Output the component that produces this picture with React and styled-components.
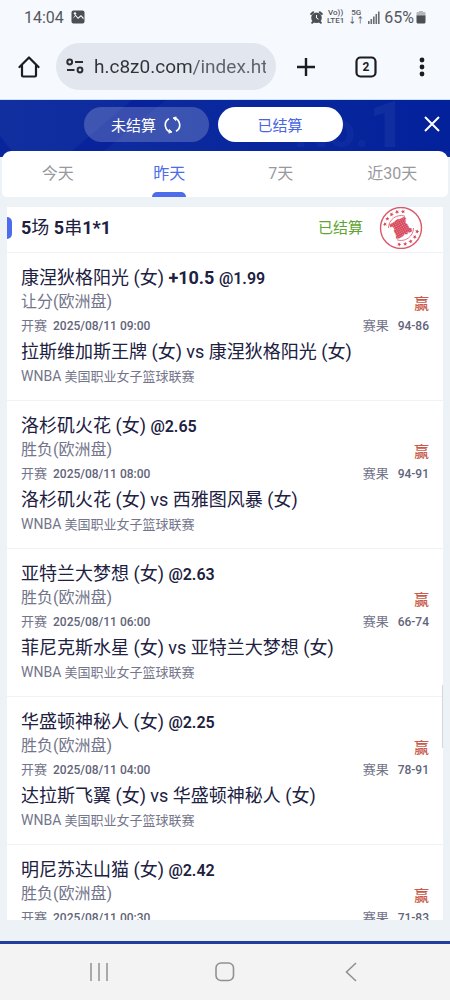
import React, { useState } from "react";
import styled, { createGlobalStyle, css } from "styled-components";

const GlobalStyle = createGlobalStyle`
  * {
    box-sizing: border-box;
  }
  body {
    margin: 0;
    background: #edf2f6;
    font-family: Roboto, "Noto Sans CJK SC", sans-serif;
    color: #20203f;
  }
  button, input {
    font-family: inherit;
    border: 0;
    padding: 0;
    background: none;
  }
  button {
    cursor: pointer;
  }
`;

const Screen = styled.div`
  display: flex;
  flex-direction: column;
  height: 100vh;
  overflow: hidden;
`;

const StatusBar = styled.div`
  display: flex;
  align-items: center;
  justify-content: space-between;
  flex: none;
  height: 34px;
  padding: 0 24px;
  background: #f6f9fe;
  color: #55585c;
  font-size: 16px;
`;

const StatusGroup = styled.div`
  display: flex;
  align-items: center;
  gap: ${({ $gap }) => $gap}px;
`;

const NetworkLabel = styled.span`
  display: flex;
  flex-direction: column;
  align-items: center;
  font-size: 8px;
  line-height: 8px;
  font-weight: 500;
`;

const BrowserBar = styled.div`
  display: flex;
  align-items: center;
  flex: none;
  height: 66px;
  padding: 0 11px 0 12px;
  background: #f6f9fe;
  border-bottom: 1px solid #c9e2f6;
`;

const BarButton = styled.button`
  display: grid;
  place-items: center;
  width: ${({ $width }) => $width}px;
  height: 44px;
  color: #1b1d21;
`;

const AddressBar = styled.div`
  display: flex;
  align-items: center;
  flex: 1;
  min-width: 0;
  gap: 10px;
  height: 47px;
  margin: 0 9px 1px 11px;
  padding: 0 10px;
  border-radius: 24px;
  background: #e2e7ef;
  color: #2b2d31;
`;

const AddressInput = styled.input`
  flex: 1;
  min-width: 0;
  font-size: 19px;
  outline: none;
  color: transparent;
  background: linear-gradient(90deg, #303338 100px, #5d6168 100px);
  background-clip: text;
`;

const Hero = styled.header`
  position: relative;
  display: flex;
  justify-content: center;
  align-items: flex-start;
  gap: 9px;
  flex: none;
  height: 51px;
  padding: 7px 24px 0 0;
  background: linear-gradient(90deg, #112f9f, #0a289d 50%, #03219b);
`;

const HeroArt = styled.svg`
  position: absolute;
  left: 0;
  top: 0;
  width: 100%;
  height: 100%;
`;

const Watermark = styled.span`
  position: absolute;
  right: 44px;
  bottom: 0;
  display: flex;
  align-items: flex-end;
  color: rgba(255, 255, 255, 0.05);
  font-size: 48px;
  font-weight: 700;
  line-height: 40px;

  b {
    font-size: 64px;
    line-height: 51px;
  }
`;

const Pill = styled.button`
  position: relative;
  display: flex;
  align-items: center;
  justify-content: center;
  gap: 8px;
  flex: 0 1 125px;
  height: 35px;
  border-radius: 18px;
  font-size: 15px;
  color: #fff;
  background: rgba(255, 255, 255, 0.2);

  ${({ $active }) =>
    $active &&
    css`
      color: #4865e5;
      background: #fff;
    `}
`;

const CloseButton = styled.button`
  position: absolute;
  top: 8px;
  right: 2px;
  display: grid;
  place-items: center;
  width: 32px;
  height: 32px;
  color: #fff;
`;

const TabsWrap = styled.div`
  flex: none;
  padding: 0 2px;
  background: linear-gradient(#0a289d 6px, transparent 6px);
`;

const Tabs = styled.nav`
  display: grid;
  grid-template-columns: repeat(4, 1fr);
  height: 46px;
  background: #fff;
  border-radius: 9px 9px 5px 5px;
`;

const Tab = styled.button`
  position: relative;
  padding-bottom: 4px;
  font-size: 16px;
  color: ${({ $active }) => ($active ? "#4d6cec" : "#98999d")};

  &::after {
    content: "";
    position: absolute;
    left: 50%;
    bottom: 0;
    width: 34px;
    height: 5px;
    margin-left: -17px;
    border-radius: 5px 5px 0 0;
    background: ${({ $active }) => ($active ? "#4d6cec" : "transparent")};
  }
`;

const BetList = styled.main`
  flex: 1;
  min-height: 0;
  margin: 10px 7px 21px;
  overflow-y: auto;
  scrollbar-width: none;
  background: #fff;
`;

const Summary = styled.div`
  display: flex;
  align-items: center;
  height: 46px;
  padding: 0 20px 4px 0;
  border-bottom: 1px solid #f0f2f5;

  &::before {
    content: "";
    width: 5px;
    height: 22px;
    margin-right: 9px;
    border-radius: 0 5px 5px 0;
    background: #4d6cec;
  }
`;

const SummaryTitle = styled.h1`
  flex: 1;
  margin: 0;
  font-size: 18px;
  line-height: 26px;
  font-weight: 400;

  b {
    font-weight: 700;
  }
`;

const Settled = styled.span`
  margin-right: 16px;
  font-size: 15px;
  line-height: 26px;
  color: #5ea532;
`;

const Bet = styled.article`
  padding: 12px 14px 11px;
  border-bottom: 1px solid #f0f2f5;
`;

const BetTitle = styled.h2`
  margin: 0;
  font-size: 18px;
  line-height: 26px;
  font-weight: 400;

  b {
    font-weight: 700;
  }
`;

const Odds = styled.span`
  font-size: 16px;
  line-height: 1;
  font-weight: 600;
`;

const Line = styled.div`
  display: flex;
  justify-content: space-between;
  align-items: center;
  color: #73758a;
`;

const Market = styled.span`
  font-size: 16px;
  line-height: 22px;
`;

const Outcome = styled.span`
  padding-top: 4px;
  font-size: 15px;
  line-height: 18px;
  font-weight: 500;
  color: #c9594c;
`;

const Meta = styled.span`
  display: flex;
  gap: ${({ $gap }) => $gap}px;
  font-size: 13px;
  line-height: 26px;

  b {
    font-size: 12px;
    font-weight: 500;
    color: #62647a;
  }
`;

const Match = styled.p`
  margin: 0;
  font-size: 18px;
  line-height: 26px;
`;

const League = styled.p`
  margin: 0;
  font-size: 13px;
  line-height: 24px;
  color: #73758a;

  span {
    font-size: 14px;
    line-height: 1;
  }
`;

const ScrollThumb = styled.span`
  position: absolute;
  top: 685px;
  right: 7px;
  width: 1px;
  height: 63px;
  background: #d3d7dd;
`;

const SystemNav = styled.footer`
  display: grid;
  grid-template-columns: repeat(3, 126px);
  justify-content: center;
  flex: none;
  height: 59px;
  border-top: 3px solid #213e9f;
  background: #f3f3f3;
`;

const NavButton = styled.button`
  display: grid;
  place-items: center;
  color: #919191;
`;

const bets = [
  {
    team: "康涅狄格阳光 (女)",
    handicap: "+10.5",
    odds: "@1.99",
    market: "让分(欧洲盘)",
    start: "2025/08/11 09:00",
    score: "94-86",
    match: "拉斯维加斯王牌 (女) vs 康涅狄格阳光 (女)",
  },
  {
    team: "洛杉矶火花 (女)",
    odds: "@2.65",
    market: "胜负(欧洲盘)",
    start: "2025/08/11 08:00",
    score: "94-91",
    match: "洛杉矶火花 (女) vs 西雅图风暴 (女)",
  },
  {
    team: "亚特兰大梦想 (女)",
    odds: "@2.63",
    market: "胜负(欧洲盘)",
    start: "2025/08/11 06:00",
    score: "66-74",
    match: "菲尼克斯水星 (女) vs 亚特兰大梦想 (女)",
  },
  {
    team: "华盛顿神秘人 (女)",
    odds: "@2.25",
    market: "胜负(欧洲盘)",
    start: "2025/08/11 04:00",
    score: "78-91",
    match: "达拉斯飞翼 (女) vs 华盛顿神秘人 (女)",
  },
  {
    team: "明尼苏达山猫 (女)",
    odds: "@2.42",
    market: "胜负(欧洲盘)",
    start: "2025/08/11 00:30",
    score: "71-83",
  },
];

const ranges = ["今天", "昨天", "7天", "近30天"];

const PictureIcon = () => (
  <svg width="14" height="14" viewBox="0 0 14 14">
    <rect x="0.5" y="0.5" width="13" height="13" rx="2" fill="#4c4f53" />
    <path d="M1.500 9l3-3 2.500 3 3-2.500 2.500 3V7.500L10 5 7 7.500 4.500 4.500z" fill="#f6f9fe" />
    <circle cx="4" cy="3.500" r="1.200" fill="#f6f9fe" />
  </svg>
);

const AlarmIcon = () => (
  <svg width="13" height="13" viewBox="0 0 13 13">
    <g stroke="#4c4f53" strokeWidth="2" strokeLinecap="round">
      <path d="M1.200 3l2-1.800M11.800 3l-2-1.800M2.200 11.800l1.300-1.300M10.800 11.800l-1.300-1.300" />
    </g>
    <circle cx="6.500" cy="6.700" r="5.300" fill="#4c4f53" />
    <path d="M6.500 4v3l2 1.200" fill="none" stroke="#f6f9fe" />
  </svg>
);

const SignalIcon = () => (
  <svg width="12" height="13" viewBox="0 0 12 13" fill="#6a6d71">
    <rect x="0" y="10" width="1.600" height="3" />
    <rect x="2.500" y="8" width="1.600" height="5" />
    <rect x="5" y="5.500" width="1.600" height="7.500" />
    <rect x="7.500" y="3" width="1.600" height="10" />
    <rect x="10" y="0.500" width="1.600" height="12.500" />
  </svg>
);

const BatteryIcon = () => (
  <svg width="10" height="14" viewBox="0 0 10 14">
    <path d="M3 1h4v1h1.500a1 1 0 011 1v3h-9V3a1 1 0 011-1H3z" fill="#b4b7bb" />
    <path d="M0.500 5.500h9V12a1.500 1.500 0 01-1.500 1.500H2A1.500 1.500 0 01.5 12z" fill="#4c4f53" />
  </svg>
);

const HomeIcon = () => (
  <svg width="22" height="22" viewBox="0 0 22 22" fill="none" stroke="currentColor" strokeWidth="2.200" strokeLinejoin="round" strokeLinecap="round">
    <path d="M1.500 11L11 1.500 20.500 11M4 9.500V19.500a1 1 0 001 1h12a1 1 0 001-1V9.500" />
  </svg>
);

const TuneIcon = () => (
  <svg width="18" height="16" viewBox="0 0 18 16" fill="none" stroke="currentColor" strokeWidth="2">
    <circle cx="3.700" cy="4" r="2.400" />
    <path d="M9 4h8M1 12h7.500" />
    <circle cx="14" cy="12" r="2.400" />
  </svg>
);

const RefreshIcon = () => (
  <svg width="17" height="18" viewBox="0 0 17 18" fill="none" stroke="currentColor" strokeWidth="1.600">
    <path d="M7.500 16.100A7.200 7.200 0 015 2.700M9.500 1.900a7.200 7.200 0 012.500 13.400" />
    <path d="M5.200 13.200l2.800 2.800-3.200 1.200zM11.800 4.800L9 2l3.200-1.200z" fill="currentColor" strokeWidth="0.600" />
  </svg>
);

const star = "M0-2.100L.6-.7 2.100-.7.9.4 1.300 1.900 0 1-1.300 1.900-.9.4-2.100-.7-.6-.7z";

const Stamp = () => (
  <svg width="44" height="42" viewBox="0 1 44 42" role="img" aria-label="赢">
    <defs>
      <pattern id="grain" width="2" height="2" patternUnits="userSpaceOnUse">
        <rect width="2" height="2" fill="#d6475a" />
        <rect width="1" height="1" fill="#eb909d" />
      </pattern>
    </defs>
    <g fill="none" stroke="#d9586a">
      <circle cx="22" cy="22" r="20.500" strokeWidth="1.400" />
      <path d="M9.500 22A12.500 12.500 0 0126 10.200" strokeWidth="0.800" />
      <path d="M34.500 22A12.500 12.500 0 0118 33.800" strokeWidth="0.800" />
    </g>
    <g fill="#d6475a">
      {[193, 214, 235, 256, 277, 12, 33, 54, 75, 96].map((deg) => (
        <path key={deg} d={star} transform={`rotate(${deg} 22 22) translate(38.500 22)`} />
      ))}
    </g>
    <text
      x="22"
      y="28"
      textAnchor="middle"
      fontSize="17"
      fontWeight="900"
      fill="url(#grain)"
      stroke="url(#grain)"
      strokeWidth="1.500"
      transform="rotate(-28 22 22)"
    >
      赢
    </text>
  </svg>
);

const BetItem = ({ bet }) => (
  <Bet>
    <BetTitle>
      {bet.team} {bet.handicap && <b>{bet.handicap} </b>}
      <Odds>{bet.odds}</Odds>
    </BetTitle>
    <Line>
      <Market>{bet.market}</Market>
      <Outcome>赢</Outcome>
    </Line>
    <Line>
      <Meta $gap={6}>
        开赛 <b>{bet.start}</b>
      </Meta>
      <Meta $gap={9}>
        赛果 <b>{bet.score}</b>
      </Meta>
    </Line>
    {bet.match && (
      <>
        <Match>{bet.match}</Match>
        <League>
          <span>WNBA</span> 美国职业女子篮球联赛
        </League>
      </>
    )}
  </Bet>
);

const App = () => {
  const [range, setRange] = useState("昨天");
  const [settled, setSettled] = useState(true);

  return (
    <Screen>
      <GlobalStyle />
      <StatusBar>
        <StatusGroup $gap={7}>
          <span>14:04</span>
          <PictureIcon />
        </StatusGroup>
        <StatusGroup $gap={4}>
          <AlarmIcon />
          <NetworkLabel>
            <span>Vo))</span>
            <span>LTE1</span>
          </NetworkLabel>
          <NetworkLabel>
            <span>5G</span>
            <span>↓↑</span>
          </NetworkLabel>
          <SignalIcon />
          <StatusGroup $gap={2}>
            <span>65%</span>
            <BatteryIcon />
          </StatusGroup>
        </StatusGroup>
      </StatusBar>

      <BrowserBar>
        <BarButton $width={33} aria-label="Home">
          <HomeIcon />
        </BarButton>
        <AddressBar>
          <TuneIcon />
          <AddressInput aria-label="Address" defaultValue="h.c8z0.com/index.ht" />
        </AddressBar>
        <BarButton $width={42} aria-label="New tab">
          <svg width="20" height="20" viewBox="0 0 20 20" stroke="currentColor" strokeWidth="2.400">
            <path d="M10 1v18M1 10h18" />
          </svg>
        </BarButton>
        <BarButton $width={78} aria-label="Tabs">
          <svg width="22" height="22" viewBox="0 0 22 22">
            <rect x="1.500" y="1.500" width="19" height="19" rx="4" fill="none" stroke="currentColor" strokeWidth="2.200" />
            <text x="11" y="15" textAnchor="middle" fontSize="12" fontWeight="700" fill="currentColor">
              2
            </text>
          </svg>
        </BarButton>
        <BarButton $width={34} aria-label="Menu">
          <svg width="6" height="20" viewBox="0 0 6 20" fill="currentColor">
            <circle cx="3" cy="3" r="2.400" />
            <circle cx="3" cy="10" r="2.400" />
            <circle cx="3" cy="17" r="2.400" />
          </svg>
        </BarButton>
      </BrowserBar>

      <Hero>
        <HeroArt viewBox="0 0 450 51" preserveAspectRatio="none" aria-hidden="true">
          <path d="M132 0h34L104 51H72zM0 36l12 15H0z" fill="#03199a" opacity="0.450" />
        </HeroArt>
        <Watermark aria-hidden="true">
          No.<b>1</b>
        </Watermark>
        <Pill $active={!settled} onClick={() => setSettled(false)}>
          未结算
          <RefreshIcon />
        </Pill>
        <Pill $active={settled} onClick={() => setSettled(true)}>
          已结算
        </Pill>
        <CloseButton aria-label="Close">
          <svg width="16" height="16" viewBox="0 0 16 16" stroke="currentColor" strokeWidth="2">
            <path d="M1 1l14 14M15 1L1 15" />
          </svg>
        </CloseButton>
      </Hero>

      <TabsWrap>
        <Tabs>
          {ranges.map((name) => (
            <Tab key={name} $active={name === range} onClick={() => setRange(name)}>
              {name}
            </Tab>
          ))}
        </Tabs>
      </TabsWrap>

      <BetList>
        <Summary>
          <SummaryTitle>
            <b>5</b>场 <b>5</b>串<b>1*1</b>
          </SummaryTitle>
          <Settled>已结算</Settled>
          <Stamp />
        </Summary>
        {bets.map((bet) => (
          <BetItem key={bet.team} bet={bet} />
        ))}
      </BetList>
      <ScrollThumb />

      <SystemNav>
        <NavButton aria-label="Recents">
          <svg width="18" height="18" viewBox="0 0 18 18" stroke="currentColor" strokeWidth="1.500">
            <path d="M1 0v18M9 0v18M17 0v18" />
          </svg>
        </NavButton>
        <NavButton aria-label="Home screen">
          <svg width="20" height="20" viewBox="0 0 20 20" fill="none" stroke="currentColor" strokeWidth="1.600">
            <rect x="1" y="1" width="17.500" height="17.500" rx="5" />
          </svg>
        </NavButton>
        <NavButton aria-label="Back">
          <svg width="12" height="20" viewBox="0 0 12 20" fill="none" stroke="currentColor" strokeWidth="1.600">
            <path d="M11 1L1.500 10 11 19" />
          </svg>
        </NavButton>
      </SystemNav>
    </Screen>
  );
};

export default App;
